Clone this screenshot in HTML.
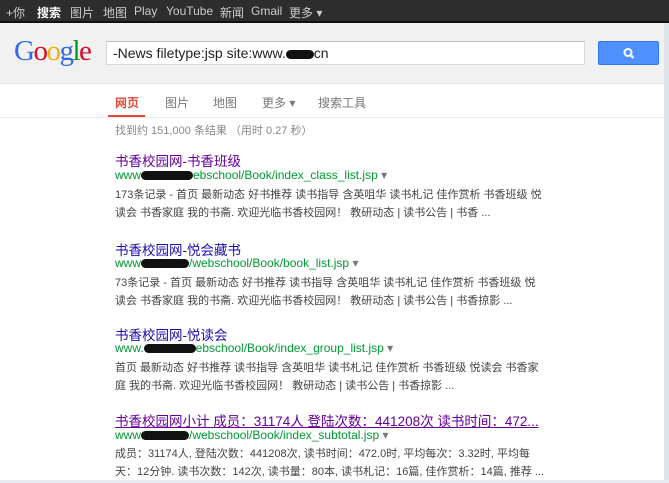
<!DOCTYPE html>
<html><head><meta charset="utf-8"><style>
*{margin:0;padding:0;box-sizing:border-box}
body{width:669px;height:483px;overflow:hidden;background:#fff;font-family:"Liberation Sans","Noto Sans CJK SC",sans-serif;position:relative}
.bar{position:absolute;left:0;top:0;width:669px;height:23px;background:#2d2d2d;border-bottom:2px solid #111}
.bar span{position:absolute;top:4px;color:#ccc;font-size:12px}
.hdr{position:absolute;left:0;top:23px;width:669px;height:61px;background:#f1f1f1;border-bottom:1px solid #e5e5e5}
.logo{position:absolute;left:14px;top:35px;font-family:"Liberation Serif",serif;font-size:29px;letter-spacing:-1.5px}
.box{position:absolute;left:106px;top:41px;width:479px;height:24px;background:#fff;border:1px solid #d9d9d9;border-top-color:#c0c0c0;font-size:14px;padding:3px 6px;color:#222}
.btn{position:absolute;left:598px;top:41px;width:61px;height:24px;background:#4d90fe;border:1px solid #3079ed;border-radius:2px}
.nav span{position:absolute;top:94px;font-size:12px;color:#777}
.ul{position:absolute;left:108px;top:115px;width:37px;height:3px;background:#dd4b39}
.sep{position:absolute;left:0;top:117px;width:664px;height:1px;background:#ebebeb}
.side{position:absolute;left:664px;top:23px;width:5px;height:460px;background:#dfe4ea}
.t{position:absolute;left:115px;font-size:13.5px;color:#1a0dab;white-space:nowrap}
.u{position:absolute;left:115px;font-size:12px;color:#009933;white-space:nowrap}
.s{position:absolute;left:115px;font-size:11px;color:#444;white-space:nowrap;line-height:18px}
.blk{display:inline-block;background:#111;border-radius:6px;height:9px;vertical-align:middle}
</style></head><body>
<div class="bar">
<span style="left:6px">+你</span><span style="left:37px;color:#fff;font-weight:bold">搜索</span><span style="left:70px">图片</span><span style="left:103px">地图</span><span style="left:134px">Play</span><span style="left:166px">YouTube</span><span style="left:220px">新闻</span><span style="left:251px">Gmail</span><span style="left:289px">更多 ▾</span>
</div>
<div class="hdr"></div>
<div class="side"></div>
<div class="logo"><span style="color:#3369e8">G</span><span style="color:#d50f25">o</span><span style="color:#eeb211">o</span><span style="color:#3369e8">g</span><span style="color:#009925">l</span><span style="color:#d50f25">e</span></div>
<div class="box">-News filetype:jsp site:www.<span class="blk" style="width:28px"></span>cn</div>
<div class="btn"><svg width="61" height="24"><circle cx="29" cy="10.5" r="3.5" fill="none" stroke="#fff" stroke-width="2"/><line x1="31.5" y1="13" x2="34.5" y2="16" stroke="#fff" stroke-width="2.4"/></svg></div>
<div class="nav"><span style="left:115px;color:#dd4b39;font-weight:bold">网页</span><span style="left:165px">图片</span><span style="left:213px">地图</span><span style="left:262px">更多 ▾</span><span style="left:318px">搜索工具</span></div>
<div class="ul"></div><div class="sep"></div>
<div class="s" style="top:122px;color:#888">找到约 151,000 条结果 （用时 0.27 秒）</div>

<div class="t" style="top:150px;color:#660099">书香校园网-书香班级</div>
<div class="u" style="top:168px">www<span class="blk" style="width:52px"></span>ebschool/Book/index_class_list.jsp <span style="color:#777">▾</span></div>
<div class="s" style="top:186px">173条记录 - 首页 最新动态 好书推荐 读书指导 含英咀华 读书札记 佳作赏析 书香班级 悦<br>读会 书香家庭 我的书斋. 欢迎光临书香校园网！ 教研动态 | 读书公告 | 书香 ...</div>

<div class="t" style="top:239px">书香校园网-悦会藏书</div>
<div class="u" style="top:256px">www<span class="blk" style="width:48px"></span>/webschool/Book/book_list.jsp <span style="color:#777">▾</span></div>
<div class="s" style="top:274px">73条记录 - 首页 最新动态 好书推荐 读书指导 含英咀华 读书札记 佳作赏析 书香班级 悦<br>读会 书香家庭 我的书斋. 欢迎光临书香校园网！ 教研动态 | 读书公告 | 书香掠影 ...</div>

<div class="t" style="top:324px">书香校园网-悦读会</div>
<div class="u" style="top:341px">www.<span class="blk" style="width:52px"></span>ebschool/Book/index_group_list.jsp <span style="color:#777">▾</span></div>
<div class="s" style="top:359px">首页 最新动态 好书推荐 读书指导 含英咀华 读书札记 佳作赏析 书香班级 悦读会 书香家<br>庭 我的书斋. 欢迎光临书香校园网！ 教研动态 | 读书公告 | 书香掠影 ...</div>

<div class="t" style="top:410px;color:#660099;text-decoration:underline">书香校园网小计 成员：31174人 登陆次数：441208次 读书时间：472...</div>
<div class="u" style="top:428px">www<span class="blk" style="width:48px"></span>/webschool/Book/index_subtotal.jsp <span style="color:#777">▾</span></div>
<div class="s" style="top:445px">成员：31174人, 登陆次数：441208次, 读书时间：472.0时, 平均每次：3.32时, 平均每<br>天：12分钟. 读书次数：142次, 读书量：80本, 读书札记：16篇, 佳作赏析：14篇, 推荐 ...</div>
<div style="position:absolute;left:0;top:480px;width:669px;height:3px;background:#e8ecf0"></div>
</body></html>
